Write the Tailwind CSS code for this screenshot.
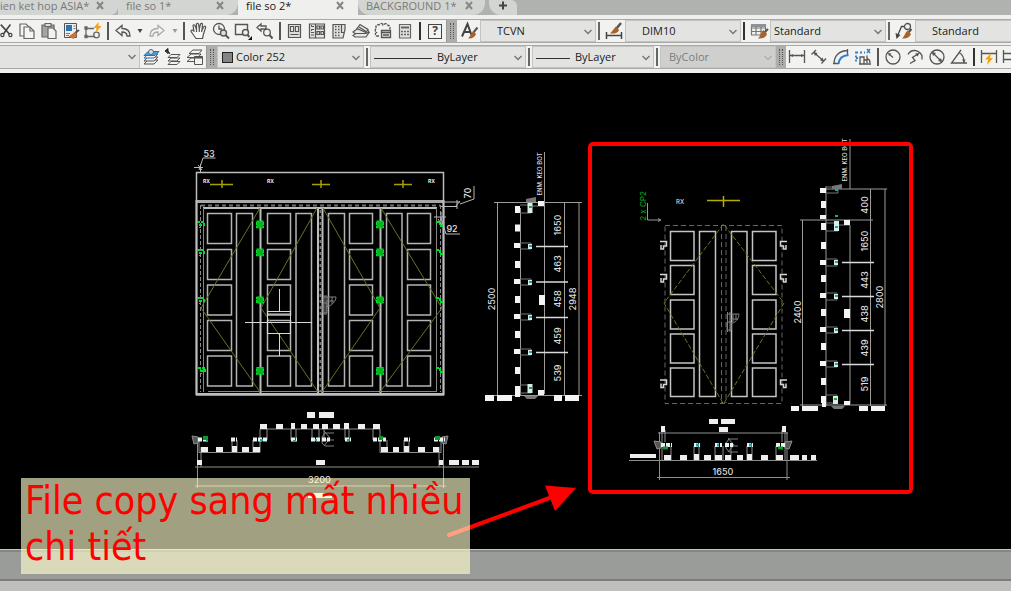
<!DOCTYPE html>
<html lang="vi">
<head>
    <meta charset="UTF-8">
    <meta name="viewport" content="width=device-width, initial-scale=1.0">
    <title>file so 2*</title>
    <script src="https://cdn.jsdelivr.net/npm/@tailwindcss/browser@4"></script>
</head>
<body class="flex h-screen flex-col overflow-hidden bg-[#efefee] font-['Open_Sans',sans-serif] text-[11px] text-[#1a1a1a]">

    <!-- File tabs -->
    <nav class="flex h-[15px] shrink-0 overflow-hidden bg-[#b0b2af] text-[#787a77]">
        <div class="flex w-[118px] shrink-0 items-start rounded-br-lg bg-[#d3d5d2]">
            <a href="#" class="-mt-[2px] w-[94px] whitespace-nowrap leading-4">ien ket hop ASIA*</a>
            <button aria-label="Close" class="pt-px"><svg class="size-3" viewBox="0 0 12 12" fill="none" stroke="#858784" stroke-width="2"><path d="M3 1l6 7M9 1L3 8"/></svg></button>
        </div>
        <div class="flex w-[120px] shrink-0 items-start rounded-br-xl bg-[#d3d5d2] pl-2">
            <a href="#" class="-mt-[2px] w-[88px] whitespace-nowrap leading-4">file so 1*</a>
            <button aria-label="Close" class="pt-px"><svg class="size-3" viewBox="0 0 12 12" fill="none" stroke="#858784" stroke-width="2"><path d="M3 1l6 7M9 1L3 8"/></svg></button>
        </div>
        <div class="flex w-[120px] shrink-0 items-start bg-[#efefee] pl-2">
            <a href="#" class="-mt-[2px] w-[88px] whitespace-nowrap leading-4 text-[#1a1a1a]">file so 2*</a>
            <button aria-label="Close" class="pt-px"><svg class="size-3" viewBox="0 0 12 12" fill="none" stroke="#858784" stroke-width="2"><path d="M3 1l6 7M9 1L3 8"/></svg></button>
        </div>
        <div class="flex w-[127px] shrink-0 items-start rounded-b-xl bg-[#d3d5d2] pl-2">
            <a href="#" class="-mt-[2px] w-[97px] whitespace-nowrap leading-4">BACKGROUND 1*</a>
            <button aria-label="Close" class="pt-px"><svg class="size-3" viewBox="0 0 12 12" fill="none" stroke="#858784" stroke-width="2"><path d="M3 1l6 7M9 1L3 8"/></svg></button>
        </div>
        <button aria-label="New tab" class="ml-1 flex w-7 shrink-0 justify-center rounded-tr-md rounded-bl-xl bg-[#d3d5d2]"><svg class="size-3" viewBox="0 0 12 12" stroke="#444" stroke-width="2"><path d="M2 5.500h8M6 1.500v8"/></svg></button>
    </nav>

    <!-- Standard and Styles toolbars -->
    <div class="mt-1 flex h-6 shrink-0 items-stretch overflow-hidden border-y border-[#a9aaa8] bg-[#f2f2f1] [&>*]:shrink-0 [&>button]:flex [&>button]:items-center [&>button]:justify-center">
        <button aria-label="Cut" class="w-4"><svg class="size-5" viewBox="0 0 20 20" fill="none" stroke="#444" stroke-width="2"><path d="M1 2l11 12M13 2L4 14"/><circle cx="3" cy="15" r="2" stroke-width="1.500"/><circle cx="13" cy="15" r="2" stroke-width="1.500"/></svg></button>
        <button aria-label="Copy" class="w-[22px]"><svg class="size-5" viewBox="0 0 20 20" fill="#f5f5f5" stroke="#666" stroke-width="1.200"><path d="M3 3h6l3 3v9H3z"/><path d="M7 6h6l4 4v7.500H7z"/><path d="M13 6v4h4" fill="none"/></svg></button>
        <button aria-label="Paste" class="w-[22px]"><svg class="size-5" viewBox="0 0 20 20" fill="#ddd" stroke="#666" stroke-width="1.200"><path d="M3 4h12v12H3z" fill="#a5a5a3"/><path d="M6 2.500h6v3H6z"/><path d="M9 7h5l3 3v7.500H9z" fill="#f2f2f1"/></svg></button>
        <button aria-label="Match properties" class="w-[22px]"><svg class="size-5" viewBox="0 0 20 20"><path d="M3.500 2.500h12v14h-12z" fill="#eee" stroke="#555"/><path d="M5 4h6v6H5z" fill="#2774b8"/><path d="M12.500 5h2M12.500 7.500h2M5 12.500h4M5 14.500h3" stroke="#777"/><path d="M18 9l-4 3" stroke="#555" stroke-width="2"/><path d="M14 11l2.500 3-4 4-5-2.500z" fill="#c87533"/></svg></button>
        <button aria-label="Block editor" class="w-[22px]"><svg class="size-5" viewBox="0 0 20 20" fill="none" stroke="#666" stroke-width="1.300"><path d="M3 7.500h8M3 7.500v8h9"/><circle cx="13.500" cy="14" r="2.800"/><path d="M2 6h2v2H2zM2 14.500h2v2H2z" fill="#666"/><path d="M15.500 1l-5 6h3l-1 5 6-7h-3z" fill="#f2a31b" stroke="none"/></svg></button>
        <span class="mx-[3px] my-[2px] w-[2px] bg-[#555]"></span>
        <button aria-label="Undo" class="w-[22px]"><svg class="size-5" viewBox="0 0 20 20" fill="#f5f5f5" stroke="#555" stroke-width="1.300"><path d="M3 9.500l6-5v3c5 0 8 2 8 7.500h-3c0-3-1.500-4-5-4v3.500z"/></svg></button>
        <button aria-label="Undo list" class="w-3"><svg class="h-1 w-2" viewBox="0 0 8 4" fill="#444"><path d="M1.500 0h5L4 4z"/></svg></button>
        <button aria-label="Redo" class="w-[22px]"><svg class="size-5" viewBox="0 0 20 20" fill="#f5f5f5" stroke="#aaa" stroke-width="1.300"><path d="M17 9.500l-6-5v3c-5 0-8 2-8 7.500h3c0-3 1.500-4 5-4v3.500z"/></svg></button>
        <button aria-label="Redo list" class="w-[14px]"><svg class="h-1 w-2" viewBox="0 0 8 4" fill="#999"><path d="M1.500 0h5L4 4z"/></svg></button>
        <span class="mr-[3px] ml-px my-[2px] w-[2px] bg-[#555]"></span>
        <button aria-label="Pan" class="w-[22px]"><svg class="size-5" viewBox="0 0 20 20" fill="#f7f7f7" stroke="#555" stroke-width="1.200" stroke-linejoin="round"><path d="M7 17.500l-5-7c0-1.500 1.500-2 3-.2L4 4.500c.5-1 1.500-1 2 0l1.500 4L7.500 3c.5-1 1.500-1 2 0l.8 5 1.200-5c.5-1 1.800-.8 2 0L13 9l2-3.500c.8-.7 1.800 0 1.700.8L14.500 13l-1 4.500z"/><path d="M7.500 8.500V11M10.300 8v3M13 9l-.5 2" fill="none"/></svg></button>
        <button aria-label="Zoom realtime" class="w-[22px]"><svg class="size-5" viewBox="0 0 20 20" fill="none" stroke="#555" stroke-width="1.300"><circle cx="8" cy="8" r="5.500"/><path d="M8 4.500V8h3"/><circle cx="12.500" cy="12" r="3" fill="#ddd"/><path d="M14.500 14l3.500 3.500" stroke-width="2"/></svg></button>
        <button aria-label="Zoom window" class="w-[22px]"><svg class="size-5" viewBox="0 0 20 20" fill="none" stroke="#555" stroke-width="1.400"><path d="M2.500 3.500h12v10h-12z"/><circle cx="12.500" cy="11.500" r="3" fill="#eee"/><path d="M14.500 14l2 2" stroke-width="2"/><path d="M19 15v4h-4z" fill="#111" stroke="none"/></svg></button>
        <button aria-label="Zoom previous" class="w-[22px]"><svg class="size-5" viewBox="0 0 20 20" fill="none" stroke="#555" stroke-width="1.300"><path d="M2 6.500l4-3.500v2h5v3H6v2z"/><circle cx="12" cy="11.500" r="3.300"/><path d="M14.500 14l3 3.500" stroke-width="2"/></svg></button>
        <span class="mx-[3px] my-[2px] w-[2px] bg-[#555]"></span>
        <button aria-label="Properties" class="w-[22px]"><svg class="size-5" viewBox="0 0 20 20" fill="none" stroke="#555" stroke-width="1.200"><path d="M3.500 3.500h12v13h-12z" fill="#ddd"/><path d="M5.500 5.500h3v5h-3zM10.500 5.500h3v5h-3zM5.500 13.500h8" fill="#f5f5f5"/></svg></button>
        <button aria-label="DesignCenter" class="w-[22px]"><svg class="size-5" viewBox="0 0 20 20" fill="none" stroke="#555" stroke-width="1.200"><path d="M2.500 3h15v14h-15z" fill="#e6e6e5"/><path d="M8.500 3v14M4 5.500h3M4 8.500h3M4 11.500h3M4 14h3M10 5h2.500v3H10zM14 5h2.500v3H14zM10 10.500h2.500v3H10zM14 10.500h2.500v3H14z"/><path d="M4 5h1M4 9h1" stroke="#2774b8" stroke-width="2"/></svg></button>
        <button aria-label="Tool palettes" class="w-[22px]"><svg class="size-5" viewBox="0 0 20 20" fill="none" stroke="#555" stroke-width="1.200"><path d="M4 3.500h12v5l-2 8.500H4z" fill="#e2e2e1"/><path d="M6 5.500h1.500M9 5.500h1.500M6 8.500h1.500M9 8.500h1.500M6 11.500h1.500M9 11.500h1.500M6 14.500h1.500M9 14.500h1.500" stroke-width="1.600"/><path d="M12.500 3.500v8H15"/></svg></button>
        <button aria-label="Sheet set" class="w-[22px]"><svg class="size-5" viewBox="0 0 20 20" fill="#e6e6e5" stroke="#555" stroke-width="1.200"><path d="M2 14.500l4-3h12l-3 4.500H4z"/><path d="M2 11l4-3h10l2 3-3 1.500H4z"/><path d="M6 7.500l3-4 8 5-2 3z"/><path d="M8 6l7 4.500" fill="none"/></svg></button>
        <button aria-label="Markup" class="w-[22px]"><svg class="size-5" viewBox="0 0 20 20" fill="none" stroke="#555" stroke-width="1.300"><path d="M6 15H3.500c-2-1-1-3 0-3.500C1.500 10 2 8 3.500 8 2 5.500 3.500 3 6 4c1.500-2.500 3.500-1.500 4 0 2-2 5-1.500 5 .5 2.500 0 2.500 2.500 1.500 4" stroke-dasharray="3 1"/><path d="M8.500 9.500h9v7h-9z" fill="#e6e6e5"/><path d="M8.500 11.500h9M10 14h6"/></svg></button>
        <button aria-label="QuickCalc" class="w-[22px]"><svg class="size-5" viewBox="0 0 20 20" fill="none" stroke="#666" stroke-width="1.200"><path d="M4.500 3.500h11v13.500h-11z" fill="#e2e2e1"/><path d="M6 6.500h8" stroke-width="2"/><path d="M6 10.500h8M6 13.500h8" stroke-dasharray="2 1" stroke-width="1.500"/></svg></button>
        <span class="mx-[3px] my-[2px] w-[2px] bg-[#333]"></span>
        <button aria-label="Help" class="w-[22px]"><span class="flex h-[15px] w-[14px] items-center justify-center border border-[#444] text-[12px] leading-3 font-bold text-[#444]">?</span></button>
        <span class="w-px bg-[#999]"></span>
        <span class="flex w-[10px] items-center justify-center gap-[2px] bg-[#adaeac]"><i class="h-4 border-l border-dotted border-[#555]"></i><i class="h-4 border-l border-dotted border-[#555]"></i></span>
        <button aria-label="Text style" class="w-[23px]"><svg class="size-5" viewBox="0 0 20 20"><path d="M3 15.500L8.500 3l4.500 12.500M5 11h6.500" fill="none" stroke="#444" stroke-width="2"/><path d="M18.500 6.500L14 12" stroke="#555" stroke-width="2"/><path d="M14.500 10l2.500 3c-1 3-4 5-8 4.500 2-1.500 3-5 5.500-7.500z" fill="#a8622a"/></svg></button>
        <div class="relative w-[116px] border border-[#c3c4c2] bg-[#e3e4e2]">
            <select aria-label="Text style name" class="h-full w-full appearance-none pl-4 leading-4"><option>TCVN</option></select>
            <svg class="pointer-events-none absolute top-2 right-[3px] h-[6px] w-2" viewBox="0 0 8 6" fill="none" stroke="#777" stroke-width="1.500"><path d="M.5 1L4 4.500 7.500 1"/></svg>
        </div>
        <span class="mx-[2px] my-[2px] w-[2px] bg-[#666]"></span>
        <button aria-label="Dimension style" class="w-[23px]"><svg class="size-5" viewBox="0 0 20 20"><path d="M2.500 11v7M17.500 11v7M3 14.500h14" stroke="#444" stroke-width="1.500"/><path d="M17 2l-5 6" stroke="#555" stroke-width="2.500"/><path d="M12 5.500l3 3.500c-1 3-4.500 4-9 3.500 2.500-2 3.500-5 6-7z" fill="#a8622a"/></svg></button>
        <div class="relative w-[116px] border border-[#c3c4c2] bg-[#e3e4e2]">
            <select aria-label="Dimension style name" class="h-full w-full appearance-none pl-4 leading-4"><option>DIM10</option></select>
            <svg class="pointer-events-none absolute top-2 right-[3px] h-[6px] w-2" viewBox="0 0 8 6" fill="none" stroke="#777" stroke-width="1.500"><path d="M.5 1L4 4.500 7.500 1"/></svg>
        </div>
        <span class="mx-[2px] my-[2px] w-[2px] bg-[#333]"></span>
        <button aria-label="Table style" class="w-[23px]"><svg class="size-5" viewBox="0 0 20 20"><path d="M2.500 4h14v10h-14zM2.500 7h14M2.500 10.500h14M7 4v10M12 4v10" fill="none" stroke="#777" stroke-width="1.200"/><path d="M2 3h15v3H2z" fill="#8c9298"/><path d="M19 8l-4 4" stroke="#555" stroke-width="2"/><path d="M14.500 9l3.500 4c-1 3-4 5-9 4.500 2-1.500 3-6 5.500-8.500z" fill="#a8622a"/></svg></button>
        <div class="relative w-[116px] border border-[#c3c4c2] bg-[#e3e4e2]">
            <select aria-label="Table style name" class="h-full w-full appearance-none pl-[3px] leading-4"><option>Standard</option></select>
            <svg class="pointer-events-none absolute top-2 right-[3px] h-[6px] w-2" viewBox="0 0 8 6" fill="none" stroke="#777" stroke-width="1.500"><path d="M.5 1L4 4.500 7.500 1"/></svg>
        </div>
        <span class="mx-[2px] my-[2px] w-[2px] bg-[#666]"></span>
        <button aria-label="Multileader style" class="w-[23px]"><svg class="size-5" viewBox="0 0 20 20"><path d="M3 16L7.500 5.500H11" fill="none" stroke="#444" stroke-width="1.300"/><path d="M1.500 12l1 6 4-4z" fill="#444"/><circle cx="13.500" cy="5.500" r="3" fill="none" stroke="#555" stroke-width="1.300"/><path d="M17.500 8L14 12" stroke="#555" stroke-width="2"/><path d="M13.500 9.500l3.500 3.500c-1 3-4 5-9 4.500 2-1.500 3-5.500 5.500-8z" fill="#a8622a"/></svg></button>
        <div class="relative w-[116px] border border-[#c3c4c2] bg-[#e3e4e2]">
            <select aria-label="Multileader style name" class="h-full w-full appearance-none pl-4 leading-4"><option>Standard</option></select>
        </div>
    </div>

    <!-- Layers, Properties and Dimension toolbars -->
    <div class="mt-[2px] flex h-6 shrink-0 items-stretch overflow-hidden border-y border-[#a9aaa8] bg-[#f2f2f1] [&>*]:shrink-0 [&>button]:flex [&>button]:items-center [&>button]:justify-center">
        <div class="relative w-[140px] border-r border-[#c3c4c2] bg-[#e3e4e2]">
            <select aria-label="Layer" class="h-full w-full appearance-none"><option></option></select>
            <svg class="pointer-events-none absolute top-2 right-[3px] h-[6px] w-2" viewBox="0 0 8 6" fill="none" stroke="#777" stroke-width="1.500"><path d="M.5 1L4 4.500 7.500 1"/></svg>
        </div>
        <button aria-label="Layer properties" class="w-[22px]"><svg class="size-5" viewBox="0 0 20 20" fill="#f2f2f1" stroke="#555"><path d="M3 17l4-4h10l-4 4z"/><path d="M3 14l4-4h10l-4 4z"/><path d="M3 11l4-4h10l-4 4z" stroke="#2774b8"/><path d="M3 8.500l4-4h11l-4 4z" fill="#4d9bd6" stroke="#2774b8"/><circle cx="10" cy="5" r="2.500" fill="#cfe2f0" stroke="#567"/></svg></button>
        <button aria-label="Make layer current" class="w-[22px]"><svg class="size-5" viewBox="0 0 20 20" fill="#f2f2f1" stroke="#555"><path d="M5 17.500l3-3h9l-3 3z"/><path d="M5 14l3-3h9l-3 3z"/><path d="M5 10.500l3-3h9l-3 3z"/><path d="M6.500 7c0-2-1-3-4-3M2 4l3-2.500v5z" stroke="#222" fill="#222"/></svg></button>
        <button aria-label="Layer states" class="w-[22px]"><svg class="size-5" viewBox="0 0 20 20" fill="#f2f2f1" stroke="#555"><path d="M2 14.500l4-3.500h9l-3 3.500z"/><path d="M2 10.500L6 7h10l-3 3.500z"/><path d="M4 6.500L8 3h9l-3 3.500z"/><path d="M9.500 9.500h8v8h-8z"/><path d="M9.500 10.500h8" stroke-width="2"/></svg></button>
        <span class="w-px bg-[#999]"></span>
        <span class="flex w-[10px] items-center justify-center gap-[2px] bg-[#adaeac]"><i class="h-4 border-l border-dotted border-[#555]"></i><i class="h-4 border-l border-dotted border-[#555]"></i></span>
        <div class="relative w-[147px] border border-[#c3c4c2] bg-[#e3e4e2]">
            <i class="pointer-events-none absolute top-[5px] left-[4px] size-[11px] border border-[#222] bg-[#848484]"></i>
            <select aria-label="Color" class="h-full w-full appearance-none pl-[18px] leading-4"><option>Color 252</option></select>
            <svg class="pointer-events-none absolute top-2 right-[3px] h-[6px] w-2" viewBox="0 0 8 6" fill="none" stroke="#777" stroke-width="1.500"><path d="M.5 1L4 4.500 7.500 1"/></svg>
        </div>
        <span class="mx-[2px] my-[2px] w-[2px] bg-[#666]"></span>
        <div class="relative w-[156px] border border-[#c3c4c2] bg-[#e3e4e2]">
            <i class="pointer-events-none absolute top-[11px] left-[3px] h-px w-[58px] bg-[#333]"></i>
            <select aria-label="Linetype" class="h-full w-full appearance-none pl-[66px] leading-4"><option>ByLayer</option></select>
            <svg class="pointer-events-none absolute top-2 right-[3px] h-[6px] w-2" viewBox="0 0 8 6" fill="none" stroke="#777" stroke-width="1.500"><path d="M.5 1L4 4.500 7.500 1"/></svg>
        </div>
        <span class="mx-[2px] my-[2px] w-[2px] bg-[#666]"></span>
        <div class="relative w-[122px] border border-[#c3c4c2] bg-[#e3e4e2]">
            <i class="pointer-events-none absolute top-[11px] left-[3px] h-px w-[34px] bg-[#333]"></i>
            <select aria-label="Lineweight" class="h-full w-full appearance-none pl-[42px] leading-4"><option>ByLayer</option></select>
            <svg class="pointer-events-none absolute top-2 right-[3px] h-[6px] w-2" viewBox="0 0 8 6" fill="none" stroke="#777" stroke-width="1.500"><path d="M.5 1L4 4.500 7.500 1"/></svg>
        </div>
        <span class="mx-[2px] my-[2px] w-[2px] bg-[#666]"></span>
        <div class="relative w-[116px] border border-[#c3c4c2] bg-[#cfd0ce]">
            <select aria-label="Plot style" disabled class="h-full w-full appearance-none pl-2 leading-4 text-[#7c7d7b] opacity-100"><option>ByColor</option></select>
            <svg class="pointer-events-none absolute top-2 right-[3px] h-[6px] w-2" viewBox="0 0 8 6" fill="none" stroke="#b0b0b0" stroke-width="1.500"><path d="M.5 1L4 4.500 7.500 1"/></svg>
        </div>
        <span class="flex w-[10px] items-center justify-center gap-[2px] bg-[#adaeac]"><i class="h-4 border-l border-dotted border-[#555]"></i><i class="h-4 border-l border-dotted border-[#555]"></i></span>
        <button aria-label="Linear" class="w-[22px]"><svg class="size-5" viewBox="0 0 20 20" fill="none" stroke="#555" stroke-width="1.300"><path d="M2.500 3v13M17.500 3v13M3 8.500h14"/><path d="M3 8.500l3-1.500v3zM17 8.500L14 7v3z" fill="#555" stroke="none"/></svg></button>
        <button aria-label="Aligned" class="w-[22px]"><svg class="size-5" viewBox="0 0 20 20" fill="none" stroke="#555" stroke-width="1.300"><path d="M2.500 7.500L7 3M12.500 16.500L17 11.500M5 5.500l9.500 8.500"/><path d="M4.500 5l4 1-2.500 3zM15 14.500l-4-1 2.500-3z" fill="#555" stroke="none"/></svg></button>
        <button aria-label="Arc length" class="w-[22px]"><svg class="size-5" viewBox="0 0 20 20" fill="none" stroke="#555" stroke-width="1.300"><path d="M3 17C3 9 8 3.500 17 3.500M2 16.500h6M16.500 2v6"/><path d="M7.500 17C8 12 11 8.500 17.500 8" stroke="#2b7fd0" stroke-width="2"/></svg></button>
        <button aria-label="Ordinate" class="w-[22px]"><svg class="size-5" viewBox="0 0 20 20" fill="none" stroke="#555" stroke-width="1.300"><path d="M7 17v-7h4v7M11 13h3V8.500M14 16v-4c3 0 3 2 3 4M6 17h12"/><path d="M3 4.500v12M3 5.500h9M3 11h3" stroke="#2b7fd0" stroke-dasharray="2 2" stroke-width="1.800"/><path d="M14 2l3 4M17 2l-3 4" stroke="#2b7fd0"/></svg></button>
        <span class="mx-[3px] my-[2px] w-[2px] bg-[#555]"></span>
        <button aria-label="Radius" class="w-[22px]"><svg class="size-5" viewBox="0 0 20 20" fill="none" stroke="#555" stroke-width="1.300"><circle cx="10" cy="10" r="7"/><path d="M10 10.500L6 7"/><path d="M5 6l3.500.5L6 9z" fill="#555" stroke="none"/></svg></button>
        <button aria-label="Jogged" class="w-[22px]"><svg class="size-5" viewBox="0 0 20 20" fill="none" stroke="#555" stroke-width="1.300"><path d="M3 7.500C6 2 13 2 17 8.500v4M5 16.500l5-3-2.500-3L13 7"/><path d="M14.500 6l-4.500.5 2.500 3z" fill="#555" stroke="none"/></svg></button>
        <button aria-label="Diameter" class="w-[22px]"><svg class="size-5" viewBox="0 0 20 20" fill="none" stroke="#555" stroke-width="1.300"><circle cx="10" cy="10" r="7"/><path d="M5 5l10 10"/><path d="M5 5l4 1-3 3zM15 15l-4-1 3-3z" fill="#555" stroke="none"/></svg></button>
        <button aria-label="Angular" class="w-[22px]"><svg class="size-5" viewBox="0 0 20 20" fill="none" stroke="#555" stroke-width="1.300"><path d="M18 16H2.500L12 3M10 5.500c3 1.500 5 5 5 10"/><path d="M15 16l-2-3.500h3.500z" fill="#555" stroke="none"/></svg></button>
        <span class="mx-[3px] my-[2px] w-[2px] bg-[#333]"></span>
        <button aria-label="Quick dimension" class="w-[22px]"><svg class="size-5" viewBox="0 0 20 20" fill="none" stroke="#555" stroke-width="1.300"><path d="M2.500 3v13M17.500 3v13M3 6.500h14"/><path d="M12 6l-6 6.500h3L8 18l6-7h-3z" fill="#f2a31b" stroke="none"/></svg></button>
        <button aria-label="Baseline" class="w-[22px]"><svg class="size-5" viewBox="0 0 20 20" fill="none" stroke="#555" stroke-width="1.300"><path d="M2.500 3v13M3 6.500h14M3 12.500h14M12 3v6"/></svg></button>
    </div>

    <main class="relative mt-[4px] flex min-h-0 flex-1 flex-col bg-black">
        <div class="min-h-0 flex-1"></div>
        <footer class="shrink-0">
            <div class="h-[31px] border-t-2 border-b-2 border-t-[#858785] border-b-[#7c7e7b] bg-[#9a9c99] shadow-[0_-1px_0_#c4c4c4]"></div>
            <div class="h-[10px] bg-[#bfbfbe]"></div>
        </footer>

        <!-- Model space -->
        <svg class="absolute inset-0 h-full w-full" viewBox="0 73 1011 518" fill="none" font-family="Inter, sans-serif">
            <!-- Door A: transom and frame -->
            <g stroke="#bdbdbd">
                <path d="M196.500 172.500H443.500V395H196.500z" stroke-width="1.500"/>
                <path d="M196 201.500H444" stroke="#a8a8a8" stroke-width="3"/>
                <path d="M201 205.500H440" stroke="#707070" stroke-width="2" stroke-dasharray="4 3"/>
                <path d="M203 208H437M196 394H444" stroke-width="2"/>
                <path d="M200.500 205V392M440.500 205V392" stroke-dasharray="4 2" stroke="#888"/>
                <path d="M203.500 208V392M436.500 208V392M208 391.500H436" stroke="#858585"/>
                <path d="M196.500 200V395M443.500 200V395M260.500 208V393M380.500 208V393" stroke-width="2"/>
                <path d="M318 208V393M322.500 208V393" stroke-width="2"/>
                <path d="M320.500 210V392" stroke="#777" stroke-width="2" stroke-dasharray="3 3"/>
            </g>
            <!-- Door A: panels -->
            <g stroke="#b5b5b5" stroke-width="1.500">
                <path d="M207.500 213.500h24v30h-24zM207.500 249.500h24v30h-24zM207.500 285h24v30h-24zM207.500 320.500h24v30h-24zM207.500 356h24v30h-24z"/>
                <path d="M267.500 213.500h23v30h-23zM267.500 249.500h23v30h-23zM267.500 285h23v30h-23zM267.500 320.500h23v30h-23zM267.500 356h23v30h-23z"/>
                <path d="M349.500 213.500h23v30h-23zM349.500 249.500h23v30h-23zM349.500 285h23v30h-23zM349.500 320.500h23v30h-23zM349.500 356h23v30h-23z"/>
                <path d="M407.500 213.500h23v30h-23zM407.500 249.500h23v30h-23zM407.500 285h23v30h-23zM407.500 320.500h23v30h-23zM407.500 356h23v30h-23z"/>
                <path d="M236.500 213.500h16v172.500h-16zM296 213.500h15.500v172.500H296zM328.500 213.500h16v172.500h-16zM386.500 213.500h15.500v172.500h-15.500z"/>
            </g>
            <path d="M260 208L201 308 260 392M317 208L261 308 318 392M323 208L380 308 322 392M381 208L442 308 380 392" stroke="#657522"/>
            <!-- Door A: hinges -->
            <g fill="#00b81c" stroke="#00e02a" stroke-dasharray="3 1">
                <path d="M256.500 221h7v7h-7zM256.500 249h7v7h-7zM256.500 297h7v6h-7zM256.500 367.500h7v7h-7z"/>
                <path d="M376.500 221h7v7h-7zM376.500 249h7v7h-7zM376.500 297h7v6h-7zM376.500 367.500h7v7h-7z"/>
                <path d="M197 222h7v3h-4v3M197 250h7v3h-4v3M197 298h7v3h-4v3M198 368h7v3h-4v3" fill="none" stroke-width="2"/>
                <path d="M436 222h4v4h3M436 250h4v4h3M436 298h4v4h3M436 368h4v4h3" fill="none" stroke-width="2"/>
            </g>
            <path d="M210 184.500h23M222 180v8M312 184.500h18M321 180v8M394 184.500h18M403 180v8" stroke="#a8a000" stroke-width="1.500"/>
            <g fill="#eee" font-size="5" font-weight="700"><text x="203" y="183">RX</text><text x="267" y="183">RX</text><text x="428" y="183">RX</text></g>
            <!-- Lock and crosshair -->
            <g stroke="#808080"><path d="M324 295v20M326 295v20M323 297h13c0 4-4 9-10 10M326 301h8M328 297v9M332 297v7M323 303h4v10h-4z"/></g>
            <path d="M245 322.500H312M267.500 311.500h23v22h-23zM267 314h23M279.500 289v22M279.500 333v23" stroke="#d8d8d8"/>
            <!-- Door A: leaders -->
            <g stroke="#b8b8b8">
                <path d="M215.500 158H203l-4 12M194 167.500h9M198 165l4 5M200.500 164v8"/>
                <path d="M474 186v13l-14 5M441 202h19M441 206.500h16M457 200v9M460 201l-5 6"/>
                <path d="M434 217h12M438 219l4 6M441 212v12M441 218l5 16h14"/>
            </g>
            <g fill="#e4e4e4" font-size="9" font-weight="500" text-anchor="middle">
                <text x="209" y="156.500">53</text>
                <text x="452" y="232">92</text>
                <text transform="translate(471 193) rotate(-90)">70</text>
            </g>

            <!-- Section A -->
            <g stroke="#9c9c9c">
                <path d="M497.500 202V396M520.500 208V396M544.500 152V394M564.500 202V396M579 202V396M494 202.500H582M494 395.500H582"/>
                <path d="M536 246.500h32M536 282h32M536 317.500h32M536 352.500h32" stroke="#dadada" stroke-width="1.500"/>
                <path d="M520 205h11v8h-11M520 243h11v6h-11M520 279h11v6h-11M520 314h11v6h-11M520 349h11v6h-11M520 385h11v8h-11M531 206h13" stroke="#777"/>
            </g>
            <path d="M526 199l10-2v5h-10zM524 396h14l-3 3h-8z" fill="#777"/>
            <path d="M515 206h5v7h-5zM515 224.500h5v7h-5zM514 243h6v5h-6zM515 261h5v7h-5zM514 279h6v5h-6zM515 296h5v7h-5zM514 314h6v5h-6zM515 331h5v7h-5zM514 349h6v5h-6zM515 367h5v7h-5zM515 386h5v7h-5zM539 295h6v10h-6zM538 201h6v5h-6zM538 390h6v5h-6zM485 395h9v6h-9zM497 395h15v6h-15zM515 393h5v4h-5zM554 395h8v6h-8zM565 395h14v6h-14z" fill="#f4f4f4"/>
            <path d="M527.500 203h5v10h-5zM528 244h4v5h-4zM528 280h4v5h-4zM528 315h4v5h-4zM528 350h4v5h-4zM527.500 384h5v9h-5z" fill="#d8ecea"/>
            <path d="M529 246h3M529 282h3M529 317h3M529 352h3" stroke="#14a8a8" stroke-width="2"/>
            <path d="M529 207h3M529 388h3" stroke="#2aa040" stroke-width="2"/>
            <g fill="#dcdcdc" font-size="9" font-weight="500" text-anchor="middle">
                <text transform="translate(495 299) rotate(-90)">2500</text>
                <text transform="translate(561 225) rotate(-90)">1650</text>
                <text transform="translate(561 264) rotate(-90)">463</text>
                <text transform="translate(561 299) rotate(-90)">458</text>
                <text transform="translate(561 336) rotate(-90)">459</text>
                <text transform="translate(561 373) rotate(-90)">539</text>
                <text transform="translate(576 299) rotate(-90)">2948</text>
                <text transform="translate(542 174) rotate(-90)" font-size="6">ENM. KEO BOT</text>
            </g>

            <!-- Plan A -->
            <g stroke="#8f8f8f">
                <path d="M199 440v12.500H260V429H380v23.500H441V440M195 467H479M197.500 440v48M443.500 440v48M201 447v20M439 447v20M195 486H446"/>
                <path d="M232 440v12M237 440v12M253 440v12M267 429v11M291 429v11M296 429v11M312 429v11M319 429v11M324 429v11M345 429v11M349 429v11M373 429v11M387 440v12M404 440v12M409 440v12"/>
                <path d="M334 433h-9l-3 4v6l3 3h9M326 440h8M324 431l6 7M324 446l6-8" stroke="#808080"/>
                <path d="M192 436l6 1v6l-4 1zM448 436l-6 1v6l4 1z" fill="#555"/>
            </g>
            <path d="M307 412h8v6h-8zM319 412h15v6h-15zM260 424h7v5h-7zM276 424h7v5h-7zM291 423h4v6h-4zM301 424h6v5h-6zM313 424h6v5h-6zM322 424h6v5h-6zM333 424h7v5h-7zM344 423h5v6h-5zM358 424h7v5h-7zM373 424h7v5h-7zM201 447h7v5h-7zM216 447h7v5h-7zM232 446h5v6h-5zM242 447h7v5h-7zM253 447h7v5h-7zM381 447h7v5h-7zM393 447h6v5h-6zM404 446h5v6h-5zM418 447h7v5h-7zM433 447h6v5h-6zM197 460h5v5h-5zM316 460h9v5h-9zM439 460h4v5h-4zM449 460h10v5h-10zM462 460h7v5h-7zM472 460h7v5h-7zM308 493h24v5h-24z" fill="#eee"/>
            <path d="M198 439.500h10M231 439.500h6M253 439.500h14M291 439.500h6M311 439.500h9M322 439.500h8M345 439.500h6M373 439.500h13M404 439.500h6M434 439.500h11" stroke="#e8f2f0" stroke-width="4" stroke-dasharray="4 1"/>
            <path d="M203 438h5M379 438h4M435 438h5" stroke="#0a9c28" stroke-width="4"/>
            <path d="M260 440h3M293 441h3M347 440h3M315 440h2M206 441h2" stroke="#14a8a8" stroke-width="2"/>
            <text x="319.500" y="483" fill="#dcdcdc" font-size="9" font-weight="500" text-anchor="middle">3200</text>

            <!-- Door B -->
            <g stroke="#666" stroke-dasharray="5 3">
                <path d="M665 225.500H782V403.500H665zM721.500 226V403M726 226V403"/>
            </g>
            <g stroke="#c4c4c4" stroke-width="1.500">
                <path d="M670.500 231.500h23.500v29h-23.500zM670.500 265.500h23.500v29h-23.500zM670.500 300h23.500v29h-23.500zM670.500 334h23.500v29h-23.500zM670.500 368h23.500v28.500h-23.500z"/>
                <path d="M752.500 231.500h23.500v29h-23.500zM752.500 265.500h23.500v29h-23.500zM752.500 300h23.500v29h-23.500zM752.500 334h23.500v29h-23.500zM752.500 368h23.500v28.500h-23.500z"/>
                <path d="M699.500 231.500h16v165h-16zM731.500 231.500h15.500v165h-15.500z"/>
            </g>
            <path d="M723.500 224L664 303 723.500 404 784 303z" stroke="#6b761c" stroke-dasharray="5 2"/>
            <!-- Door B: hinges -->
            <path d="M660 241.500h6.500v4.500h-3v3h-2.500v-4M660 274.500h6.500v4.500h-3v3h-2.500v-4M660 380h6.500v4.500h-3v3h-2.500v-4M787 241.500h-6.500v4.500h3v3h2.500v-4M787 274.500h-6.500v4.500h3v3h2.500v-4M787 380h-6.500v4.500h3v3h2.500v-4" stroke="#d5d5d5" stroke-width="1.500"/>
            <path d="M707 200.500h33M723.500 196v11" stroke="#b4ac00" stroke-width="1.500"/>
            <path d="M727.500 312v20M730 312v20M727 314h12c0 5-4 9-9 10M730 319h8M733 314v8M736 314v6M727 322h4v8h-4z" stroke="#808080"/>
            <path d="M647.500 203v17H660M658 218.500l3 1.500-3 1.500" stroke="#999"/>
            <text x="676" y="204" fill="#ddd" font-size="6" font-weight="500">RX</text>
            <text transform="translate(646 206) rotate(-90)" fill="#00b020" font-size="8" text-anchor="middle">2 x CP2</text>

            <!-- Section B -->
            <g stroke="#9c9c9c">
                <path d="M802.500 220V406M826 186V406M850 139V189M850 225V404M870.500 189V406M885 189V406M822 189H887M800 220H873M800 405H887"/>
                <path d="M842 262.500h32M842 296.500h32M842 330.500h32M842 364.500h32" stroke="#dadada" stroke-width="1.500"/>
                <path d="M826 187h12v6h-12M826 223h12v8h-12M826 259h11v7h-11M826 293h11v7h-11M826 327h11v6h-11M826 361h11v6h-11M826 395h11v8h-11M838 225h12" stroke="#777"/>
            </g>
            <path d="M832 186l10-2v5h-10zM831 406h14l-3 3h-8z" fill="#777"/>
            <path d="M820 188h6v5h-6zM821 201h5v7h-5zM820 215h6v4h-6zM821 223h5v7h-5zM821 242h5v7h-5zM820 260h6v5h-6zM821 275h5v7h-5zM820 293h6v5h-6zM821 309h5v7h-5zM820 327h6v5h-6zM821 343h5v7h-5zM820 361h6v5h-6zM821 378h5v7h-5zM821 396h5v7h-5zM844 309h6v9h-6zM844 220h6v5h-6zM844 401h6v4h-6zM791 406h8v5h-8zM802 406h16v5h-16zM822 403h4v4h-4zM859 406h9v5h-9zM871 406h14v5h-14z" fill="#f4f4f4"/>
            <path d="M834 221h5v10h-5zM834 260h4v5h-4zM834 294h4v5h-4zM834 328h4v5h-4zM834 362h4v5h-4zM833 396h5v8h-5z" fill="#d8ecea"/>
            <path d="M835 190h3M835 216h3M835 227h3M835 262h3M835 296h3M835 330h3M835 364h3" stroke="#14a8a8" stroke-width="2"/>
            <path d="M834 399h3" stroke="#2aa040" stroke-width="2"/>
            <g fill="#dcdcdc" font-size="9" font-weight="500" text-anchor="middle">
                <text transform="translate(801 312) rotate(-90)">2400</text>
                <text transform="translate(868 205) rotate(-90)">400</text>
                <text transform="translate(868 241) rotate(-90)">1650</text>
                <text transform="translate(868 280) rotate(-90)">443</text>
                <text transform="translate(868 314) rotate(-90)">438</text>
                <text transform="translate(868 348) rotate(-90)">439</text>
                <text transform="translate(868 384) rotate(-90)">519</text>
                <text transform="translate(883 297) rotate(-90)">2800</text>
                <text transform="translate(847 160) rotate(-90)" font-size="6">ENM. KEO BOT</text>
            </g>

            <!-- Plan B -->
            <g stroke="#8f8f8f">
                <path d="M658 433H788M629 460.500H817M659.500 432v48M787 432v48M657 477.500H790M662 430v30M665 430v12M782 430v12M785 430v30"/>
                <path d="M671 446v14M694 446v14M699 446v14M715 446v14M723 446v14M731 446v14M747 446v14M752 446v14M776 446v14"/>
                <path d="M738 439h-9l-3 4v5l3 4h9M730 446h8M728 438l6 7M728 452l6-7" stroke="#808080"/>
                <path d="M654 441l7 1v6l-4 1zM792 441l-7 1v6l4 1z" fill="#555"/>
            </g>
            <path d="M709 419h9v5h-9zM721 419h14v5h-14zM719 427h9v5h-9zM661 426h4v6h-4zM782 426h4v6h-4zM630 454h26v4h-26zM664 455h7v5h-7zM680 455h7v5h-7zM694 454h5v6h-5zM704 455h7v5h-7zM715 455h7v5h-7zM725 455h6v5h-6zM737 455h6v5h-6zM747 454h5v6h-5zM761 455h7v5h-7zM776 455h7v5h-7zM790 455h9v5h-9zM802 455h5v5h-5zM811 455h5v5h-5z" fill="#eee"/>
            <path d="M661 445h11M694 445h6M715 445h7M725 445h8M747 445h6M776 445h10" stroke="#e8f2f0" stroke-width="4" stroke-dasharray="4 1"/>
            <path d="M663 448h5M778 448h5" stroke="#0a9c28" stroke-width="3"/>
            <path d="M696 445h3M749 445h3M717 445h2" stroke="#14a8a8" stroke-width="3"/>
            <text x="723" y="475" fill="#dcdcdc" font-size="9" font-weight="500" text-anchor="middle">1650</text>

            <!-- Highlight frame and arrow -->
            <rect x="590" y="144" width="321" height="348" rx="3" stroke="#f00" stroke-width="4"/>
            <path d="M449 535L555 496" stroke="#f00" stroke-width="4" stroke-linecap="round"/>
            <path d="M576 488L545 485.500 555 511z" fill="#f00"/>
        </svg>

        <p class="absolute bottom-[17px] left-[21px] h-24 w-[449px] bg-[#fffdcc]/63 pl-1 font-['DejaVu_Sans_Condensed','DejaVu_Sans',sans-serif] text-[39px] leading-[46px] whitespace-nowrap text-[#f00]">File copy sang mất nhiều<br>chi tiết</p>
    </main>
</body>
</html>
